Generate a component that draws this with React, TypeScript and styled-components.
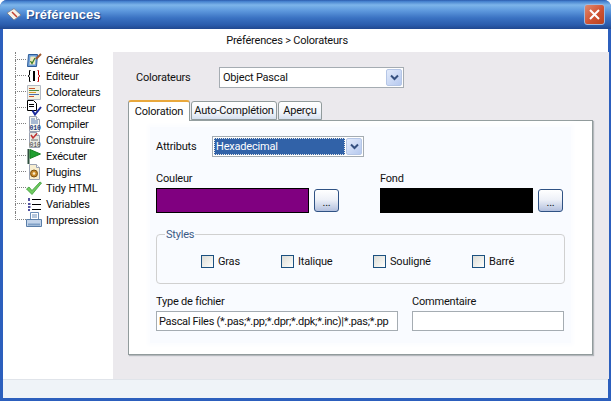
import React from 'react'
import styled, { createGlobalStyle } from 'styled-components'

const GlobalStyle = createGlobalStyle`
  html, body { margin: 0; padding: 0; background: #fff; }
  body { font-family: Roboto, "Liberation Sans", Arial, sans-serif; font-size: 11px; letter-spacing: -0.2px; color: #111; }
`

const Window = styled.div`
  width: 611px;
  height: 401px;
  display: flex;
  flex-direction: column;
  box-sizing: border-box;
  border-radius: 7px 7px 0 0;
  overflow: hidden;
  background: #2c5fbd;
`

const TitleBar = styled.div`
  height: 29px;
  flex: none;
  display: flex;
  align-items: center;
  padding: 0 6px 0 6px;
  background: linear-gradient(#2a55a6 0, #3f7ccb 1px, #7db5ea 5px, #5c97dc 11px, #3a72c2 18px, #2a5cac 25px, #20488f 29px);
`

const AppIcon = styled.svg`
  width: 16px;
  height: 16px;
  margin-right: 4px;
`

const Title = styled.span`
  flex: 1;
  color: #fff;
  font-family: "Liberation Sans", Arial, sans-serif;
  font-size: 13px;
  font-weight: bold;
  letter-spacing: 0;
  text-shadow: 1px 1px 1px #1c3f80;
`

const CloseButton = styled.div`
  width: 19px;
  height: 19px;
  border: 1px solid #9db8e0;
  border-radius: 3px;
  box-sizing: content-box;
  display: flex;
  align-items: center;
  justify-content: center;
  background: linear-gradient(135deg, #e08a70, #cf5232 55%, #b8431f);
`

const Frame = styled.div`
  flex: 1;
  display: flex;
  flex-direction: column;
  margin: 0 3px 3px;
  min-height: 0;
`

const Breadcrumb = styled.div`
  height: 23px;
  flex: none;
  background: #fff;
  display: flex;
  align-items: center;
  justify-content: center;
  padding-right: 37px;
`

const Main = styled.div`
  flex: 1;
  display: flex;
  min-height: 0;
`

const Tree = styled.ul`
  width: 110px;
  flex: none;
  box-sizing: border-box;
  margin: 0;
  padding: 0 0 0 12px;
  background: #fff;
  list-style: none;
`

const TreeRow = styled.li`
  height: 16px;
  display: flex;
  align-items: center;
`

const Connector = styled.span<{ $last?: boolean }>`
  width: 11px;
  height: 16px;
  flex: none;
  display: flex;
  flex-direction: column;
  box-sizing: border-box;

  &::before {
    content: '';
    height: 8px;
    box-sizing: border-box;
    border-left: 1px dotted #808080;
    border-bottom: 1px dotted #808080;
  }
  &::after {
    content: '';
    height: 8px;
    box-sizing: border-box;
    border-left: ${p => (p.$last ? 'none' : '1px dotted #808080')};
  }
`

const TreeIcon = styled.svg`
  width: 16px;
  height: 16px;
  flex: none;
  margin-right: 4px;
`

const Panel = styled.div`
  flex: 1;
  box-sizing: border-box;
  display: flex;
  flex-direction: column;
  padding: 15px 16px 24px 15px;
  background: #ebe9ed;
`

const TopRow = styled.div`
  display: flex;
  align-items: center;
  padding-left: 8px;
  margin-bottom: 12px;
`

const RowLabel = styled.span<{ $width: number }>`
  width: ${p => p.$width}px;
  flex: none;
`

const Select = styled.div<{ $width: number }>`
  width: ${p => p.$width}px;
  height: 21px;
  box-sizing: border-box;
  border: 1px solid #a5acb2;
  background: #fff;
  display: flex;
  align-items: stretch;
  padding: 1px;
`

const SelectValue = styled.span<{ $focused?: boolean }>`
  flex: 1;
  display: flex;
  align-items: center;
  padding-left: 2px;
  color: ${p => (p.$focused ? '#fff' : '#111')};
  background: ${p => (p.$focused ? '#3162a8' : 'transparent')};
  outline: ${p => (p.$focused ? '1px dotted #e8e8e8' : 'none')};
  outline-offset: -1px;
`

const SelectArrow = styled.span`
  width: 16px;
  flex: none;
  margin-left: 1px;
  display: flex;
  align-items: center;
  justify-content: center;
  border: 1px solid #b5c6e6;
  border-radius: 2px;
  box-sizing: border-box;
  background: linear-gradient(135deg, #e3ebfb, #b6c9ef);
`

const TabStrip = styled.div`
  display: flex;
  align-items: flex-end;
  height: 20px;
  position: relative;
  z-index: 1;
`

const Tab = styled.div<{ $active?: boolean; $width: number }>`
  width: ${p => p.$width}px;
  height: ${p => (p.$active ? 21 : 19)}px;
  box-sizing: border-box;
  margin-right: 1px;
  margin-bottom: ${p => (p.$active ? -1 : 0)}px;
  display: flex;
  align-items: center;
  justify-content: center;
  border: 1px solid #919b9c;
  border-bottom: ${p => (p.$active ? 'none' : '1px solid #919b9c')};
  border-top: ${p => (p.$active ? '2px solid #e9a83c' : '1px solid #919b9c')};
  border-radius: 3px 3px 0 0;
  background: ${p => (p.$active ? '#fff' : 'linear-gradient(#fff, #f2f5fa 60%, #d5dfee)')};
`

const TabBody = styled.div`
  flex: 1;
  display: flex;
  box-sizing: border-box;
  padding: 6px 21px 11px 21px;
  border: 1px solid #919b9c;
  background: #fff;
  box-shadow: 1px 1px 1px #b4b8bc;
`

const Sheet = styled.div`
  flex: 1;
  box-sizing: border-box;
  padding: 9px 6px 0;
  background: #f9fbff;
  box-shadow: 0 0 4px 3px #fcfdff;
`

const AttributeRow = styled.div`
  display: flex;
  align-items: center;
  margin-bottom: 15px;
`

const ColorGrid = styled.div`
  display: grid;
  grid-template-columns: 224px 1fr;
`

const FieldLabel = styled.div`
  height: 13px;
  line-height: 13px;
  margin-bottom: 3px;
`

const ColorPicker = styled.div`
  display: flex;
  align-items: center;
  gap: 5px;
`

const Swatch = styled.div<{ $color: string }>`
  width: 153px;
  height: 25px;
  box-sizing: border-box;
  border: 1px solid #000;
  background: ${p => p.$color};
`

const DotsButton = styled.div`
  width: 25px;
  height: 23px;
  box-sizing: border-box;
  border: 1px solid #2f5284;
  border-radius: 3px;
  display: flex;
  align-items: flex-end;
  justify-content: center;
  padding-bottom: 3px;
  line-height: 11px;
  background: linear-gradient(#fff, #eef1f8 45%, #b3c0de);
`

const StyleGroup = styled.fieldset`
  width: 409px;
  height: 56px;
  box-sizing: border-box;
  margin: 15px 0 0;
  padding: 0;
  border: 1px solid #d0d0d0;
  border-radius: 4px;
`

const StyleLegend = styled.legend`
  margin-left: 8px;
  padding: 0 1px;
  color: #3c5a85;
  line-height: 13px;
`

const CheckRow = styled.div`
  display: flex;
  align-items: center;
  padding: 14px 0 0 44px;
`

const CheckItem = styled.label<{ $width: number }>`
  width: ${p => p.$width}px;
  display: flex;
  align-items: center;
  gap: 4px;
`

const CheckBox = styled.span`
  width: 13px;
  height: 13px;
  box-sizing: border-box;
  border: 1px solid #1c5180;
  background: linear-gradient(135deg, #dcdcd7, #f4f4f0 70%, #fff);
`

const FileGrid = styled.div`
  display: grid;
  grid-template-columns: 256px 152px;
  margin-top: 11px;
`

const TextField = styled.input<{ $width: number }>`
  display: block;
  width: ${p => p.$width}px;
  height: 20px;
  box-sizing: border-box;
  border: 1px solid #a5acb2;
  padding: 0 2px;
  margin: 0;
  font: inherit;
  letter-spacing: -0.3px;
  color: #111;
  background: #fff;
  outline: none;
`

const StatusBar = styled.div`
  height: 19px;
  flex: none;
  box-sizing: border-box;
  border-top: 1px solid #e0e4ea;
  background: #eff3f8;
`

const Chevron = () => (
  <svg width="9" height="7" viewBox="0 0 9 7">
    <path d="M1 1.5 L4.5 5 L8 1.5" fill="none" stroke="#35507f" strokeWidth="2" />
  </svg>
)

const Page = ({ children, fill = '#f6f6ee' }: { children?: React.ReactNode; fill?: string }) => (
  <>
    <path d="M3.5 .5 H10.5 L13.5 3.5 V15.5 H3.5 Z" fill={fill} stroke="#9aa2b2" />
    <path d="M10.5 .5 V3.5 H13.5" fill="#fff" stroke="#9aa2b2" />
    {children}
  </>
)

const icons: Record<string, React.ReactNode> = {
  general: (
    <>
      <path d="M2.5 2.5 H11.5 L10.5 14.5 H1.5 Z" fill="#6f9fd8" stroke="#2d5c98" />
      <path d="M4.5 4.5 H9.5 L9 12.5 H3.5 Z" fill="#f2ecc0" />
      <path d="M4.5 9 L6 11.5 L9 6" fill="none" stroke="#3a7d2a" strokeWidth="1.3" />
      <path d="M10 7 L15 2" stroke="#a05a30" strokeWidth="2" />
    </>
  ),
  editor: (
    <>
      <path d="M4.5 2.5 H3.5 V7 L2 8 L3.5 9 V13.5 H4.5" fill="none" stroke="#000" />
      <path d="M8 3 V13" stroke="#000" strokeWidth="2" />
      <path d="M11.5 2.5 H12.5 V7 L14 8 L12.5 9 V13.5 H11.5" fill="none" stroke="#c00000" />
    </>
  ),
  colors: (
    <>
      <path d="M1.5 1.5 H14.5 V15.5 H1.5 Z" fill="#f4f2e4" stroke="#b4bac6" />
      <path d="M3 4.5 H9" stroke="#c85a30" />
      <path d="M3 6.5 H13" stroke="#4f8a4a" />
      <path d="M3 8.5 H10" stroke="#d09a30" />
      <path d="M3 10.5 H13" stroke="#4a70b0" />
      <path d="M3 12.5 H8" stroke="#c85a30" />
    </>
  ),
  spell: (
    <>
      <path d="M1.5 .5 H7.5 L10.5 3.5 V10.5 H1.5 Z" fill="#fff" stroke="#000" />
      <path d="M3 4.5 H8 M3 6.5 H8" stroke="#000" />
      <path d="M6.5 10.5 L9 14.5 L15 7" fill="none" stroke="#1a2a9c" strokeWidth="2" />
    </>
  ),
  compile: (
    <Page>
      <path d="M5 3 H9 M5 5 H12 M5 7 H12" stroke="#5b7fb8" />
      <text x="3.5" y="14" fontSize="6.5" fontWeight="bold" fill="#1f3f7f" fontFamily="Liberation Mono, monospace">010</text>
    </Page>
  ),
  build: (
    <Page fill="#e9e9e2">
      <path d="M5 3 L7 6 L11 1.5" fill="none" stroke="#c03030" strokeWidth="1.5" />
      <path d="M5 8 H12" stroke="#707070" />
      <text x="3.5" y="14.5" fontSize="6.5" fill="#404040" fontFamily="Liberation Mono, monospace">010</text>
    </Page>
  ),
  run: (
    <>
      <path d="M2.5 1 V16" stroke="#2f4f3f" strokeWidth="2" />
      <path d="M4 1.5 L14.5 6 L4 10.5 Z" fill="#1f9f2f" stroke="#148020" />
    </>
  ),
  plugin: (
    <Page fill="#f8eed0">
      <circle cx="8" cy="9.5" r="3.5" fill="#c98a2a" stroke="#7a4f10" />
      <circle cx="8" cy="9.5" r="1.3" fill="#f8eed0" />
    </Page>
  ),
  tidy: (
    <path d="M0.5 9 L3 7 L6 10.5 L14 2 L15.5 3 L6 14.5 Z" fill="#6fcb5f" stroke="#3c9a3a" strokeWidth=".8" />
  ),
  variables: (
    <>
      <path d="M3 2 V5 M2 8 H4.5 M2 11 H4.5 M3 13 V15" stroke="#1a1a80" strokeWidth="1.5" />
      <path d="M6 3.5 H15 M6 8.5 H15 M6 13.5 H15" stroke="#000" />
    </>
  ),
  print: (
    <>
      <path d="M4.5 .5 H12.5 V7.5 H4.5 Z" fill="#fff" stroke="#6d8fb8" />
      <path d="M6 3 H11 M6 5 H11" stroke="#6d8fb8" />
      <path d="M.5 7.5 H15.5 V14.5 H.5 Z" fill="#c3d4ea" stroke="#5a7ea8" />
      <path d="M2 12.5 H14" stroke="#7f9fc5" strokeWidth="2" />
    </>
  ),
}

const treeItems = [
  { key: 'general', label: 'Générales' },
  { key: 'editor', label: 'Editeur' },
  { key: 'colors', label: 'Colorateurs' },
  { key: 'spell', label: 'Correcteur' },
  { key: 'compile', label: 'Compiler' },
  { key: 'build', label: 'Construire' },
  { key: 'run', label: 'Exécuter' },
  { key: 'plugin', label: 'Plugins' },
  { key: 'tidy', label: 'Tidy HTML' },
  { key: 'variables', label: 'Variables' },
  { key: 'print', label: 'Impression' },
]

const styleOptions = [
  { label: 'Gras', width: 80 },
  { label: 'Italique', width: 92 },
  { label: 'Souligné', width: 99 },
  { label: 'Barré', width: 60 },
]

export default function App() {
  return (
    <>
      <GlobalStyle />
      <Window>
        <TitleBar>
          <AppIcon viewBox="0 0 16 16">
            <path d="M1 6 L8 1.5 L15 8 L8 13 Z" fill="#f4f0e8" stroke="#7a8698" />
            <path d="M6 5 L11 10" stroke="#c04030" strokeWidth="1.5" />
          </AppIcon>
          <Title>Préférences</Title>
          <CloseButton>
            <svg width="11" height="11" viewBox="0 0 11 11">
              <path d="M1 1 L10 10 M10 1 L1 10" stroke="#fff" strokeWidth="2" />
            </svg>
          </CloseButton>
        </TitleBar>
        <Frame>
          <Breadcrumb>Préférences &gt; Colorateurs</Breadcrumb>
          <Main>
            <Tree>
              {treeItems.map((item, i) => (
                <TreeRow key={item.key}>
                  <Connector $last={i === treeItems.length - 1} />
                  <TreeIcon viewBox="0 0 16 16">{icons[item.key]}</TreeIcon>
                  {item.label}
                </TreeRow>
              ))}
            </Tree>
            <Panel>
              <TopRow>
                <RowLabel $width={83}>Colorateurs</RowLabel>
                <Select $width={185}>
                  <SelectValue>Object Pascal</SelectValue>
                  <SelectArrow><Chevron /></SelectArrow>
                </Select>
              </TopRow>
              <TabStrip>
                <Tab $active $width={62}>Coloration</Tab>
                <Tab $width={86}>Auto-Complétion</Tab>
                <Tab $width={44}>Aperçu</Tab>
              </TabStrip>
              <TabBody>
                <Sheet>
                  <AttributeRow>
                    <RowLabel $width={56}>Attributs</RowLabel>
                    <Select $width={152}>
                      <SelectValue $focused>Hexadecimal</SelectValue>
                      <SelectArrow><Chevron /></SelectArrow>
                    </Select>
                  </AttributeRow>
                  <ColorGrid>
                    <div>
                      <FieldLabel>Couleur</FieldLabel>
                      <ColorPicker>
                        <Swatch $color="#800080" />
                        <DotsButton>...</DotsButton>
                      </ColorPicker>
                    </div>
                    <div>
                      <FieldLabel>Fond</FieldLabel>
                      <ColorPicker>
                        <Swatch $color="#000" />
                        <DotsButton>...</DotsButton>
                      </ColorPicker>
                    </div>
                  </ColorGrid>
                  <StyleGroup>
                    <StyleLegend>Styles</StyleLegend>
                    <CheckRow>
                      {styleOptions.map(opt => (
                        <CheckItem key={opt.label} $width={opt.width}>
                          <CheckBox />
                          {opt.label}
                        </CheckItem>
                      ))}
                    </CheckRow>
                  </StyleGroup>
                  <FileGrid>
                    <div>
                      <FieldLabel>Type de fichier</FieldLabel>
                      <TextField $width={242} readOnly value="Pascal Files (*.pas;*.pp;*.dpr;*.dpk;*.inc)|*.pas;*.pp" />
                    </div>
                    <div>
                      <FieldLabel>Commentaire</FieldLabel>
                      <TextField $width={152} readOnly value="" />
                    </div>
                  </FileGrid>
                </Sheet>
              </TabBody>
            </Panel>
          </Main>
          <StatusBar />
        </Frame>
      </Window>
    </>
  )
}
